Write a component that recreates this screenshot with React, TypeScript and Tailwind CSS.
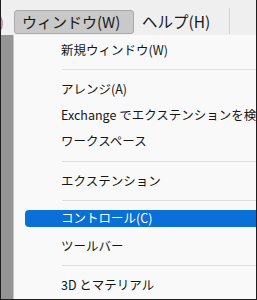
import React from "react";

const font = { fontFamily: '"Noto Sans CJK JP", "Noto Sans", sans-serif' };

function Item({ label, active = false }: { label: string; active?: boolean }) {
  if (active) {
    return (
      <div className="h-[26px] pt-[3px]">
        <div className="h-[17px] ml-[11px] bg-[#0a6fd6] rounded-l-[4px] flex items-center pl-[36px] text-white text-[12.5px] whitespace-nowrap">
          {label}
        </div>
      </div>
    );
  }
  return (
    <div className="h-[26px] flex items-center pl-[47px] text-[12.5px] text-[#161616] whitespace-nowrap">
      {label}
    </div>
  );
}

function Sep({ h = 13 }: { h?: number }) {
  return (
    <div className={h === 14 ? "h-[14px] flex items-center pl-[48px]" : "h-[13px] flex items-center pl-[48px]"}>
      <div className="h-px w-full bg-[#dedede]" />
    </div>
  );
}

export default function App() {
  return (
    <div
      className="w-[257px] h-[300px] overflow-hidden bg-[#f0f0f0] border-x border-b border-[#1e1e1e] flex flex-col"
      style={font}
    >
      <div className="h-[35px] flex items-start pt-[10px] bg-[#efefef] shrink-0">
        <div className="w-[13px] h-[24px] overflow-hidden flex items-center justify-end">
          <span className="text-[15px] text-[#c4722a] mr-[10px]">)</span>
        </div>
        <div className="h-[24px] w-[120px] bg-[#c9c9c9] border border-[#a9a9a9] rounded-[3px] flex items-center pl-[7px] text-[15px] text-[#1a1a1a] whitespace-nowrap">
          ウィンドウ(W)
        </div>
        <div className="h-[24px] flex items-center ml-[8px] text-[15.5px] text-[#1a1a1a] whitespace-nowrap">
          ヘルプ(H)
        </div>
        <div className="ml-[19px] mt-[-2px] h-[26px] w-px bg-[#d2d2d2]" />
      </div>
      <div className="flex-1 flex min-h-0">
        <div className="w-[12px] bg-[#959595] shrink-0" />
        <div className="w-px bg-[#c8c8c8] shrink-0" />
        <div className="flex-1 bg-[#f9f9f9] pt-[2px] overflow-hidden">
          <Item label="新規ウィンドウ(W)" />
          <Sep />
          <Item label="アレンジ(A)" />
          <Item label="Exchange でエクステンションを検索" />
          <Item label="ワークスペース" />
          <Sep h={14} />
          <Item label="エクステンション" />
          <Sep />
          <Item label="コントロール(C)" active />
          <Item label="ツールバー" />
          <Sep />
          <Item label="3D とマテリアル" />
        </div>
      </div>
    </div>
  );
}
